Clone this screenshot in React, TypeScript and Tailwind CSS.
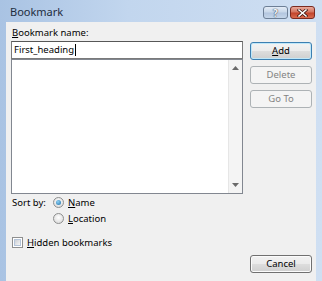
import React from "react";

const font = { fontFamily: '"Noto Sans", "Open Sans", sans-serif' };

function Btn({ label, u, variant }: { label: string; u?: number; variant: "default" | "normal" | "disabled" }) {
  const cls =
    variant === "default"
      ? "border-[#3c7fb1] shadow-[inset_0_0_0_1px_#bfe7f9] text-[#000] bg-[linear-gradient(#f3f3f3_0%,#ececec_48%,#dddddd_52%,#cfcfcf_100%)]"
      : variant === "normal"
      ? "border-[#707070] shadow-[inset_0_0_0_1px_#fbfbfb] text-[#000] bg-[linear-gradient(#f2f2f2_0%,#ebebeb_48%,#dddddd_52%,#cfcfcf_100%)]"
      : "border-[#adb2b5] text-[#838383] bg-[#f4f4f4]";
  return (
    <div className={`w-[62px] h-[18px] rounded-[3px] border flex items-center justify-center text-[9.5px] leading-none ${cls}`}>
      {u !== undefined ? (
        <span>
          {label.slice(0, u)}
          <span className="underline">{label[u]}</span>
          {label.slice(u + 1)}
        </span>
      ) : (
        label
      )}
    </div>
  );
}

function Under({ text, i = 0 }: { text: string; i?: number }) {
  return (
    <span>
      {text.slice(0, i)}
      <span className="underline underline-offset-1">{text[i]}</span>
      {text.slice(i + 1)}
    </span>
  );
}

function Radio({ checked }: { checked?: boolean }) {
  return (
    <div className="w-[11px] h-[11px] rounded-full border border-[#8e8f8f] bg-[radial-gradient(circle_at_50%_40%,#ffffff,#d4d4d4)] flex items-center justify-center">
      {checked && <div className="w-[5px] h-[5px] rounded-full bg-[radial-gradient(circle_at_40%_35%,#8fd1f5,#1a6fa8)]" />}
    </div>
  );
}

export default function App() {
  return (
    <div
      style={font}
      className="w-[322px] h-[281px] overflow-hidden flex flex-col bg-[linear-gradient(90deg,#a9c3e3_0%,#c2d6ee_40%,#cfdff2_100%)] text-[#000]"
    >
      {/* title bar */}
      <div className="h-[22px] flex items-center justify-between pl-[10px] pr-[7px] shrink-0">
        <span className="text-[11px] text-[#1e2d3e] leading-none mt-[1px]">Bookmark</span>
        <div className="flex gap-[2px] mt-[3px]">
          <div className="w-[25px] h-[13px] rounded-[3px] border border-[#6d7f96] bg-[linear-gradient(#e4ecf6_0%,#c9d8ea_45%,#b3c6df_55%,#c5d6ea_100%)] flex items-center justify-center">
            <span className="text-[10px] font-bold leading-none text-[#f8f8f8] [text-shadow:0_0_1px_#2c3c55,0_0_1px_#2c3c55]">?</span>
          </div>
          <div className="w-[25px] h-[13px] rounded-[3px] border border-[#7a2a20] bg-[linear-gradient(#e9a99b_0%,#d47561_45%,#c2442c_55%,#d96b4f_100%)] flex items-center justify-center">
            <svg width="11" height="8" viewBox="0 0 11 8">
              <path d="M2 1 L9 7 M9 1 L2 7" stroke="#3a1410" strokeWidth="3" strokeLinecap="square" />
              <path d="M2 1 L9 7 M9 1 L2 7" stroke="#ffffff" strokeWidth="1.6" strokeLinecap="square" />
            </svg>
          </div>
        </div>
      </div>

      {/* client */}
      <div className="flex-1 mx-[6px] bg-[#f0f0f0] pl-[5px] pr-[4px] pt-[6px] flex flex-col text-[9.5px] leading-none">
        <div className="flex gap-[7px]">
          <div className="w-[232px] flex flex-col">
            <div className="h-[12px] mb-[1px] pl-[1px]"><Under text="Bookmark name:" /></div>
            <div className="h-[18px] border border-[#7a7a7a] border-t-[#575757] bg-white flex items-center pl-[2px]">
              First_heading<span className="inline-block w-[1px] h-[12px] bg-black ml-[1px]" />
            </div>
            <div className="h-[135px] border border-[#828790] bg-white flex justify-end">
              <div className="w-[14px] bg-[#f4f4f4] border-l border-[#e6e6e6] flex flex-col justify-between items-center py-[6px]">
                <svg width="7" height="4" viewBox="0 0 7 4"><path d="M0 4 L3.5 0 L7 4Z" fill="#6a6a6a" /></svg>
                <svg width="7" height="4" viewBox="0 0 7 4"><path d="M0 0 L3.5 4 L7 0Z" fill="#6a6a6a" /></svg>
              </div>
            </div>
          </div>
          <div className="flex flex-col gap-[6px] pt-[14px]">
            <Btn label="Add" u={0} variant="default" />
            <Btn label="Delete" variant="disabled" />
            <Btn label="Go To" variant="disabled" />
          </div>
        </div>

        <div className="flex items-start mt-[3px] pl-[1px]">
          <span className="w-[41px] mt-[1px]">Sort by:</span>
          <div className="flex flex-col gap-[5px]">
            <div className="flex items-center gap-[4px]"><Radio checked /><Under text="Name" /></div>
            <div className="flex items-center gap-[4px]"><Radio /><Under text="Location" /></div>
          </div>
        </div>

        <div className="flex items-center gap-[4px] mt-[13px] pl-[1px]">
          <div className="w-[11px] h-[11px] border border-[#8e8f8f] p-[1px] bg-white">
            <div className="w-full h-full bg-[linear-gradient(135deg,#cbcfd5,#f6f6f6)] border border-[#b4c4d9]" />
          </div>
          <Under text="Hidden bookmarks" />
        </div>

        <div className="flex justify-end mt-[7px]">
          <Btn label="Cancel" variant="normal" />
        </div>
      </div>
    </div>
  );
}
